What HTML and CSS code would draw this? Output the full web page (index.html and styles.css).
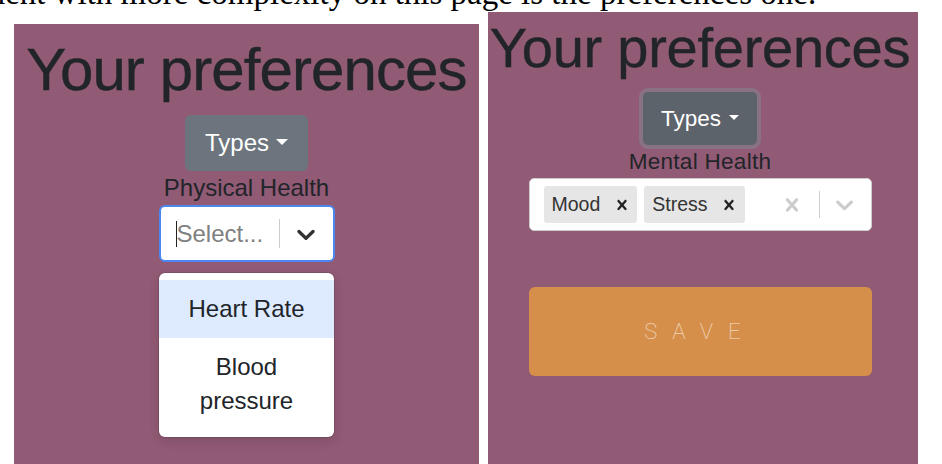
FILE: index.html
```html
<!DOCTYPE html>
<html lang="en">
<head>
<meta charset="utf-8">
<title>Your preferences</title>
<link rel="stylesheet" href="styles.css">
</head>
<body>
<p class="intro">element with more complexity on this page is the preferences one.</p>
<div class="shots">
  <section class="panel panel-physical">
    <h1 class="title">Your preferences</h1>
    <button class="btn-types" type="button">Types<span class="caret"></span></button>
    <div class="field-label">Physical Health</div>
    <div class="select select-focused">
      <div class="select-value"><span class="text-cursor"></span><span class="placeholder">Select...</span></div>
      <span class="separator"></span>
      <svg class="chevron chevron-dark" viewBox="0 0 20 20" aria-hidden="true"><path d="M4.516 7.548c0.436-0.446 1.043-0.481 1.576 0l3.908 3.747 3.908-3.747c0.533-0.481 1.141-0.446 1.574 0 0.436 0.445 0.408 1.197 0 1.615-0.406 0.418-4.695 4.502-4.695 4.502-0.217 0.223-0.502 0.335-0.787 0.335s-0.57-0.112-0.789-0.335c0 0-4.287-4.084-4.695-4.502s-0.436-1.170 0-1.615z"/></svg>
    </div>
    <div class="menu">
      <div class="option option-active">Heart Rate</div>
      <div class="option">Blood pressure</div>
    </div>
  </section>
  <section class="panel panel-mental">
    <h1 class="title title-small">Your preferences</h1>
    <button class="btn-types btn-types-focus" type="button">Types<span class="caret"></span></button>
    <div class="field-label field-label-small">Mental Health</div>
    <div class="multi">
      <div class="chips">
        <span class="chip"><span class="chip-label">Mood</span><span class="chip-remove"><svg viewBox="0 0 20 20" aria-hidden="true"><path d="M14.348 14.849c-0.469 0.469-1.229 0.469-1.697 0l-2.651-3.030-2.651 3.029c-0.469 0.469-1.229 0.469-1.697 0-0.469-0.469-0.469-1.229 0-1.697l2.758-3.150-2.759-3.152c-0.469-0.469-0.469-1.228 0-1.697s1.228-0.469 1.697 0l2.652 3.031 2.651-3.031c0.469-0.469 1.228-0.469 1.697 0s0.469 1.229 0 1.697l-2.758 3.152 2.758 3.150c0.469 0.469 0.469 1.229 0 1.698z"/></svg></span></span>
        <span class="chip"><span class="chip-label">Stress</span><span class="chip-remove"><svg viewBox="0 0 20 20" aria-hidden="true"><path d="M14.348 14.849c-0.469 0.469-1.229 0.469-1.697 0l-2.651-3.030-2.651 3.029c-0.469 0.469-1.229 0.469-1.697 0-0.469-0.469-0.469-1.229 0-1.697l2.758-3.150-2.759-3.152c-0.469-0.469-0.469-1.228 0-1.697s1.228-0.469 1.697 0l2.652 3.031 2.651-3.031c0.469-0.469 1.228-0.469 1.697 0s0.469 1.229 0 1.697l-2.758 3.152 2.758 3.150c0.469 0.469 0.469 1.229 0 1.698z"/></svg></span></span>
      </div>
      <svg class="clear-icon" viewBox="0 0 20 20" aria-hidden="true"><path d="M14.348 14.849c-0.469 0.469-1.229 0.469-1.697 0l-2.651-3.030-2.651 3.029c-0.469 0.469-1.229 0.469-1.697 0-0.469-0.469-0.469-1.229 0-1.697l2.758-3.150-2.759-3.152c-0.469-0.469-0.469-1.228 0-1.697s1.228-0.469 1.697 0l2.652 3.031 2.651-3.031c0.469-0.469 1.228-0.469 1.697 0s0.469 1.229 0 1.697l-2.758 3.152 2.758 3.150c0.469 0.469 0.469 1.229 0 1.698z"/></svg>
      <span class="separator separator-small"></span>
      <svg class="chevron chevron-light" viewBox="0 0 20 20" aria-hidden="true"><path d="M4.516 7.548c0.436-0.446 1.043-0.481 1.576 0l3.908 3.747 3.908-3.747c0.533-0.481 1.141-0.446 1.574 0 0.436 0.445 0.408 1.197 0 1.615-0.406 0.418-4.695 4.502-4.695 4.502-0.217 0.223-0.502 0.335-0.787 0.335s-0.57-0.112-0.789-0.335c0 0-4.287-4.084-4.695-4.502s-0.436-1.170 0-1.615z"/></svg>
    </div>
    <button class="btn-save" type="button">SAVE</button>
  </section>
</div>
</body>
</html>
```

FILE: styles.css
```css
html, body {
  margin: 0;
  padding: 0;
  background: #ffffff;
  overflow: hidden;
  height: 464px;
}

.intro {
  margin: -23px 0 0 -59px;
  font-family: "Liberation Serif", "Times New Roman", serif;
  font-size: 33px;
  line-height: 33px;
  white-space: nowrap;
  color: #000;
}

.shots {
  display: flex;
  align-items: flex-start;
  gap: 9px;
  padding-left: 14px;
  margin-top: 2px;
}

.panel {
  background: #915a75;
  display: flex;
  flex-direction: column;
  align-items: center;
  box-sizing: border-box;
  height: 480px;
  font-family: "Liberation Sans", Arial, sans-serif;
  color: #212529;
}

.panel-physical {
  width: 465px;
  margin-top: 12px;
  padding-top: 10px;
}

.panel-mental {
  width: 430px;
  padding-top: 2px;
  padding-right: 6px;
}

.title {
  margin: 0;
  font-weight: 400;
  font-size: 60px;
  line-height: 72px;
  letter-spacing: -0.9px;
  white-space: nowrap;
  color: #212529;
  -webkit-text-stroke: 0.4px #212529;
}

.title-small {
  font-size: 56px;
  line-height: 67px;
  letter-spacing: -0.25px;
}

.btn-types {
  margin-top: 9px;
  border: 0;
  border-radius: 6px;
  background: #6c757d;
  color: #fff;
  font-family: "Liberation Sans", Arial, sans-serif;
  font-size: 24px;
  line-height: 36px;
  padding: 10px 20px;
  display: flex;
  align-items: center;
}

.caret {
  display: inline-block;
  width: 0;
  height: 0;
  margin-left: 7px;
  margin-top: -3px;
  border-top: 6px solid #fff;
  border-left: 6px solid transparent;
  border-right: 6px solid transparent;
}

.btn-types-focus {
  margin-top: 11px;
  background: #5c636a;
  font-size: 22.5px;
  line-height: 34px;
  padding: 9.5px 18px 9.5px 18px;
  border-radius: 5px;
  box-shadow: 0 0 0 4px rgba(130, 138, 145, 0.5);
}

.btn-types-focus .caret {
  margin-left: 8px;
  border-top-width: 5.5px;
  border-left-width: 5px;
  border-right-width: 5px;
}

.field-label {
  font-size: 24px;
  line-height: 34px;
  color: #212529;
  white-space: nowrap;
}

.field-label-small {
  font-size: 22.5px;
  line-height: 33px;
  letter-spacing: 0.3px;
}

.select {
  box-sizing: border-box;
  width: 176px;
  height: 57px;
  background: #fff;
  border: 2px solid #4a87f2;
  border-radius: 6px;
  display: flex;
  align-items: center;
}

.select-value {
  flex: 1;
  display: flex;
  align-items: center;
  padding-left: 15px;
  min-width: 0;
}

.text-cursor {
  width: 1px;
  height: 26px;
  background: #222;
}

.placeholder {
  color: #808080;
  font-size: 24px;
  white-space: nowrap;
}

.separator {
  width: 1px;
  height: 29px;
  background: #cccccc;
  align-self: center;
}

.chevron {
  flex: none;
}

.chevron-dark {
  width: 30px;
  height: 30px;
  margin-left: 11px;
  margin-right: 12px;
  fill: #333333;
}

.menu {
  box-sizing: border-box;
  width: 175px;
  margin-top: 11px;
  padding: 7px 0;
  background: #fff;
  border-radius: 6px;
  box-shadow: 0 0 0 1px rgba(0, 0, 0, 0.1), 0 4px 11px rgba(0, 0, 0, 0.12);
}

.option {
  padding: 12px 12px;
  font-size: 24px;
  line-height: 34px;
  text-align: center;
  color: #212529;
}

.option-active {
  background: #deebff;
}

.multi {
  box-sizing: border-box;
  width: 343px;
  height: 53px;
  background: #fff;
  border: 1px solid #cccccc;
  border-radius: 5px;
  display: flex;
  align-items: center;
}

.chips {
  flex: 1;
  display: flex;
  align-items: center;
  gap: 7px;
  padding-left: 14px;
}

.chip {
  display: flex;
  align-items: center;
  height: 37px;
  background: #e6e6e6;
  border-radius: 3px;
  color: #333333;
  font-size: 19.5px;
}

.chip-label {
  padding-left: 8px;
  padding-right: 6px;
}

.chip-remove {
  display: flex;
  align-items: center;
  justify-content: center;
  width: 31px;
  height: 100%;
}

.chip-remove svg {
  width: 20px;
  height: 20px;
  fill: #222;
}

.clear-icon {
  width: 26px;
  height: 26px;
  margin-right: 14px;
  fill: #cccccc;
  flex: none;
}

.separator-small {
  height: 27px;
}

.chevron-light {
  width: 29px;
  height: 29px;
  margin-left: 10px;
  margin-right: 12px;
  fill: #cccccc;
}

.btn-save {
  margin-top: 56px;
  width: 343px;
  height: 89px;
  border: 0;
  border-radius: 6px;
  background: #d68f4a;
  color: rgba(255, 255, 255, 0.55);
  font-family: Roboto, "Liberation Sans", sans-serif;
  font-weight: 200;
  font-size: 22px;
  letter-spacing: 15px;
  padding: 0;
}
```
